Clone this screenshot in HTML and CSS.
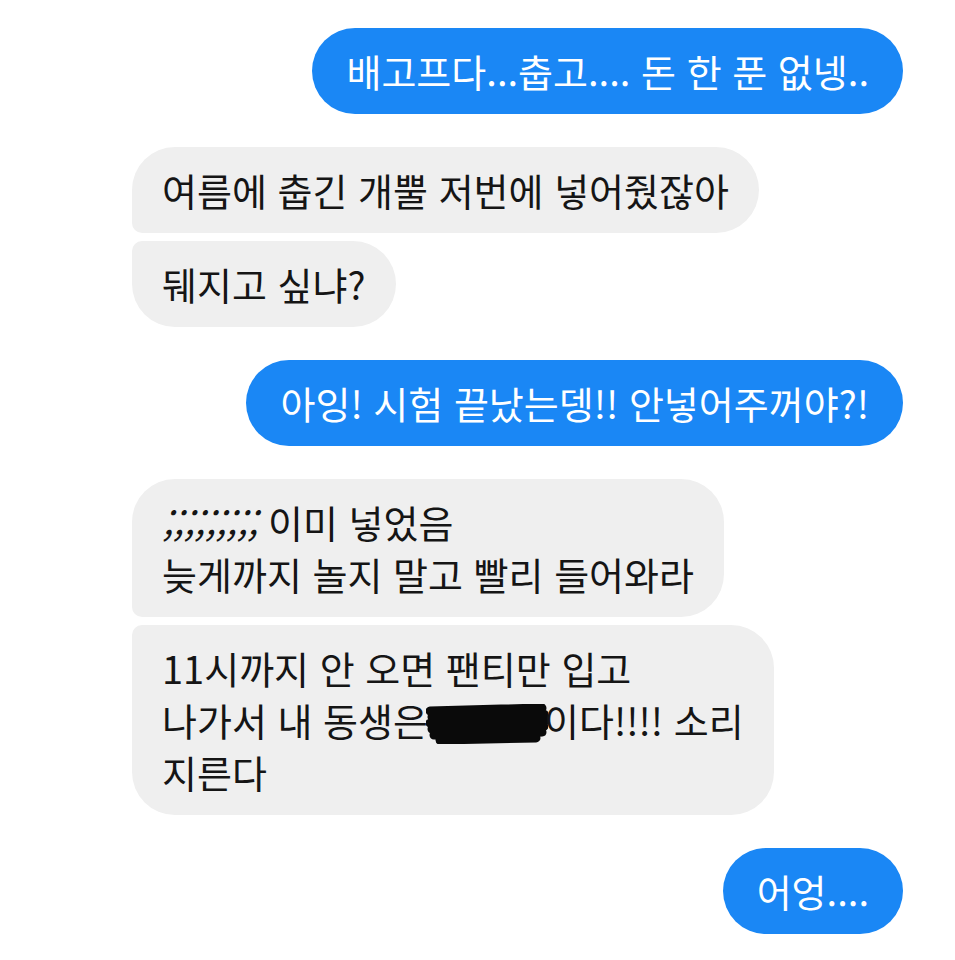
FILE: index.html
```html
<!DOCTYPE html>
<html lang="ko">
<head>
<meta charset="utf-8">
<title>Chat</title>
<link rel="stylesheet" href="styles.css">
</head>
<body>
<main class="chat">
  <div class="row out">
    <div class="bubble blue">배고프다...춥고.... 돈 한 푼 없넹..</div>
  </div>

  <div class="group in">
    <div class="bubble gray first">여름에 춥긴 개뿔 저번에 넣어줬잖아</div>
    <div class="bubble gray last">뒈지고 싶냐?</div>
  </div>

  <div class="row out">
    <div class="bubble blue">아잉! 시험 끝났는뎅!! 안넣어주꺼야?!</div>
  </div>

  <div class="group in">
    <div class="bubble gray first"><span class="semi">;;;;;;;;;</span> 이미 넣었음<br>늦게까지 놀지 말고 빨리 들어와라</div>
    <div class="bubble gray last">11시까지 안 오면 팬티만 입고<br>나가서 내 동생은<svg class="redact" width="122" height="40" viewBox="0 0 122 40" aria-hidden="true"><path d="M4 7 L116 4 L6 13 L118 10 L4 19 L120 16 L6 25 L118 22 L8 31 L116 28 L14 36 L110 34" fill="none" stroke="#0a0a0a" stroke-width="9" stroke-linejoin="round" stroke-linecap="round"/></svg>이다!!!! 소리<br>지른다</div>
  </div>

  <div class="row out">
    <div class="bubble blue">어엉....</div>
  </div>
</main>
</body>
</html>
```

FILE: styles.css
```css
html, body {
  margin: 0;
  padding: 0;
  background: #ffffff;
}

body {
  font-family: "Noto Sans CJK KR", "Noto Sans", sans-serif;
  width: 955px;
  height: 960px;
  overflow: hidden;
}

.chat {
  display: flex;
  flex-direction: column;
  padding: 28px 52px 0 132px;
  gap: 33px;
}

.row {
  display: flex;
}

.row.out {
  justify-content: flex-end;
}

.group {
  display: flex;
  flex-direction: column;
  align-items: flex-start;
  gap: 8px;
}

.bubble {
  font-size: 38px;
  line-height: 52px;
  border-radius: 43px;
  white-space: nowrap;
}

.blue {
  background: #1a87f5;
  color: #ffffff;
  padding: 17px 34px;
}

.gray {
  background: #efefef;
  color: #151515;
  padding: 17px 30px;
}

.group .first {
  border-bottom-left-radius: 10px;
}

.group .last {
  border-top-left-radius: 10px;
}

.semi {
  font-style: italic;
}

.redact {
  vertical-align: -8px;
  margin: 0 -4px 0 -2px;
}
```
